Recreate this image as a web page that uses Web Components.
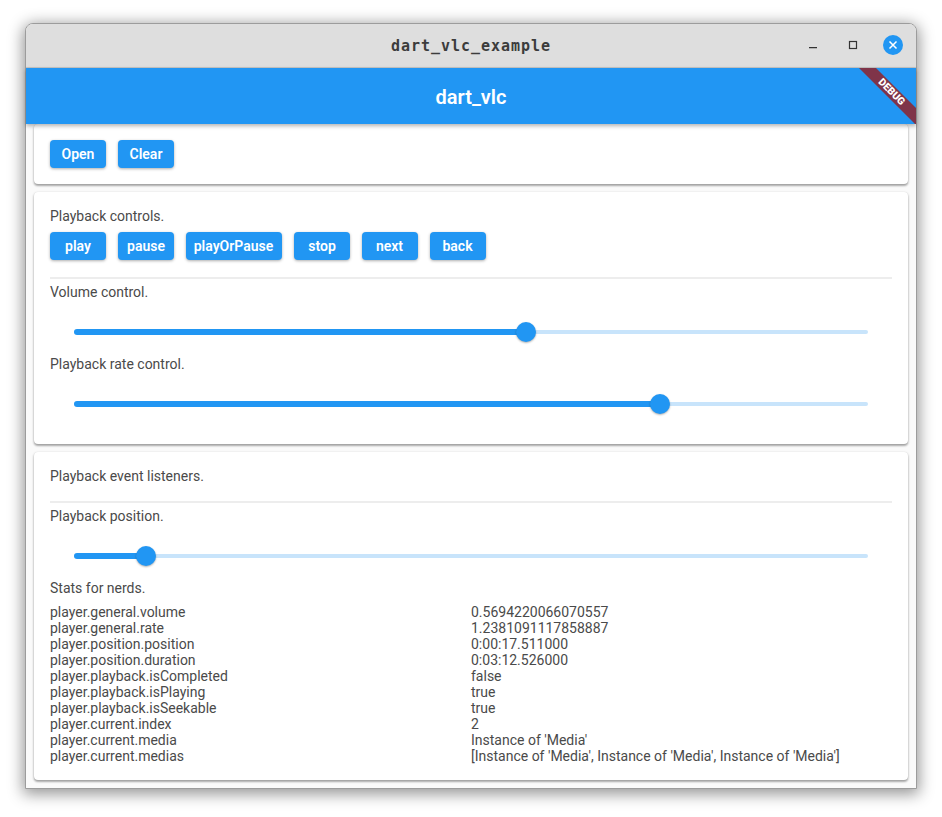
<!DOCTYPE html>
<html>
<head>
<meta charset="utf-8">
<title>dart_vlc_example</title>
<style>
  html, body { margin: 0; background: #fff; }
  body { width: 942px; height: 817px; overflow: hidden; font-family: Roboto, sans-serif; }
</style>
</head>
<body>
<desktop-window>
  <title-bar slot="title">dart_vlc_example</title-bar>
  <app-bar slot="bar">dart_vlc</app-bar>
  <debug-banner slot="bar"></debug-banner>

  <demo-card>
    <button-row>
      <demo-button>Open</demo-button>
      <demo-button>Clear</demo-button>
    </button-row>
  </demo-card>

  <demo-card>
    <demo-text>Playback controls.</demo-text>
    <button-row style="margin-top: 8px">
      <demo-button>play</demo-button>
      <demo-button>pause</demo-button>
      <demo-button style="width: 96px; padding: 0 1px 0 0">playOrPause</demo-button>
      <demo-button>stop</demo-button>
      <demo-button style="padding: 0 9px 0 8px">next</demo-button>
      <demo-button style="padding: 0 9px 0 8px">back</demo-button>
    </button-row>
    <demo-divider></demo-divider>
    <demo-text>Volume control.</demo-text>
    <demo-slider style="margin-top: 8px" value="56.93"></demo-slider>
    <demo-text>Playback rate control.</demo-text>
    <demo-slider style="margin-top: 8px" value="73.8"></demo-slider>
  </demo-card>

  <demo-card>
    <demo-text>Playback event listeners.</demo-text>
    <demo-divider></demo-divider>
    <demo-text>Playback position.</demo-text>
    <demo-slider style="margin-top: 8px" value="9.07"></demo-slider>
    <demo-text>Stats for nerds.</demo-text>
    <stats-table style="margin-top: 8px">
      <span>player.general.volume</span><span>0.5694220066070557</span>
      <span>player.general.rate</span><span>1.2381091117858887</span>
      <span>player.position.position</span><span>0:00:17.511000</span>
      <span>player.position.duration</span><span>0:03:12.526000</span>
      <span>player.playback.isCompleted</span><span>false</span>
      <span>player.playback.isPlaying</span><span>true</span>
      <span>player.playback.isSeekable</span><span>true</span>
      <span>player.current.index</span><span>2</span>
      <span>player.current.media</span><span>Instance of 'Media'</span>
      <span>player.current.medias</span><span>[Instance of 'Media', Instance of 'Media', Instance of 'Media']</span>
    </stats-table>
  </demo-card>
</desktop-window>

<script>
(function () {
  function define(name, html, setup) {
    const template = document.createElement("template");
    template.innerHTML = html;
    customElements.define(name, class extends HTMLElement {
      connectedCallback() {
        if (this.shadowRoot) return;
        this.attachShadow({ mode: "open" });
        this.shadowRoot.appendChild(template.content.cloneNode(true));
        if (setup) setup(this);
      }
    });
  }

  define("desktop-window", `
  <style>
    :host {
      display: flex;
      flex-direction: column;
      position: relative;
      box-sizing: border-box;
      width: 892px;
      height: 766px;
      margin: 23px 0 0 25px;
      border: 1px solid #9c9c9c;
      border-radius: 8px 8px 0 0;
      background: #fafafa;
      box-shadow: 0 3px 15px 2px rgba(0, 0, 0, .42);
    }
    .head { border-radius: 7px 7px 0 0; overflow: hidden; }
    .bar { position: relative; z-index: 1; }
    .list { display: flex; flex-direction: column; gap: 8px; padding: 0 8px 8px; }
  </style>
  <div class="head"><slot name="title"></slot></div>
  <div class="bar"><slot name="bar"></slot></div>
  <div class="list"><slot></slot></div>
`);

  define("title-bar", `
  <style>
    :host {
      display: flex;
      align-items: center;
      justify-content: center;
      position: relative;
      height: 43px;
      background: #dedede;
      border-bottom: 1px solid #c4c4c4;
      color: #3c3c3c;
      font: bold 15px "DejaVu Sans Mono", monospace;
      letter-spacing: .97px;
    }
    .controls {
      position: absolute;
      right: 13px;
      top: 11px;
      display: flex;
      gap: 20px;
      align-items: center;
    }
    svg { display: block; }
  </style>
  <slot></slot>
  <div class="controls">
    <svg width="20" height="20" viewBox="0 0 20 20"><path d="M6 12.6h8" stroke="#333" stroke-width="1.3" fill="none"/></svg>
    <svg width="20" height="20" viewBox="0 0 20 20"><rect x="6.5" y="6.5" width="7" height="7" stroke="#333" stroke-width="1.2" fill="none"/></svg>
    <svg width="20" height="20" viewBox="0 0 20 20"><circle cx="10" cy="10" r="10" fill="#2196f3"/><path d="M6.5 6.5l7 7M13.5 6.5l-7 7" stroke="#fff" stroke-width="1.5" fill="none"/></svg>
  </div>
`);

  define("app-bar", `
  <style>
    :host {
      display: flex;
      align-items: center;
      justify-content: center;
      box-sizing: border-box;
      height: 56px;
      padding-top: 2px;
      background: #2196f3;
      color: #fff;
      font: 600 20px Roboto, sans-serif;
      box-shadow: 0 2px 4px rgba(0, 0, 0, .3);
    }
  </style>
  <slot></slot>
`);

  define("debug-banner", `
  <style>
    :host {
      position: absolute;
      top: 0;
      right: 0;
      width: 60px;
      height: 56px;
      overflow: hidden;
      pointer-events: none;
    }
    div {
      position: absolute;
      top: 18.25px;
      left: -12.75px;
      width: 97px;
      height: 12px;
      transform: rotate(45deg);
      background: #7f3449;
      color: #fff;
      text-align: center;
      font: 900 10.2px/12px Roboto, sans-serif;
    }
  </style>
  <div>DEBUG</div>
`);

  define("demo-card", `
  <style>
    :host {
      display: flex;
      flex-direction: column;
      padding: 16px;
      background: #fff;
      border-radius: 4px;
      box-shadow: 0 2px 2px rgba(0, 0, 0, .24), 0 1px 3px rgba(0, 0, 0, .2), 0 0 1px rgba(0, 0, 0, .1);
    }
  </style>
  <slot></slot>
`);

  define("demo-text", `
  <style>
    :host {
      display: block;
      height: 16px;
      color: #4a4a4a;
      font: 14px/16px Roboto, sans-serif;
    }
  </style>
  <slot></slot>
`);

  define("button-row", `
  <style>
    :host { display: flex; gap: 12px; }
  </style>
  <slot></slot>
`);

  define("demo-button", `
  <style>
    :host {
      display: flex;
      align-items: center;
      justify-content: center;
      box-sizing: border-box;
      min-width: 56px;
      height: 28px;
      padding: 0 8px;
      background: #2196f3;
      color: #fff;
      border-radius: 4px;
      font: 600 14px/16px Roboto, sans-serif;
      box-shadow: 0 1px 3px rgba(0, 0, 0, .32);
    }
  </style>
  <slot></slot>
`);

  define("demo-divider", `
  <style>
    :host {
      display: block;
      height: 2px;
      margin: 17px 0 5px;
      background: #ededed;
    }
  </style>
`);

  define("demo-slider", `
  <style>
    :host {
      display: flex;
      align-items: center;
      height: 48px;
      padding: 0 24px;
    }
    .track {
      position: relative;
      flex: 1;
      height: 4px;
      background: #c8e4fb;
      border-radius: 2px;
    }
    .fill {
      position: absolute;
      left: 0;
      top: -1px;
      height: 6px;
      background: #2196f3;
      border-radius: 3px 0 0 3px;
    }
    .thumb {
      position: absolute;
      top: -8px;
      width: 20px;
      height: 20px;
      margin-left: -10px;
      background: #2196f3;
      border-radius: 50%;
      box-shadow: 0 1px 2px rgba(0, 0, 0, .3);
    }
  </style>
  <div class="track"><div class="fill"></div><div class="thumb"></div></div>
`, function (el) {
    const value = el.getAttribute("value") + "%";
    el.shadowRoot.querySelector(".fill").style.width = value;
    el.shadowRoot.querySelector(".thumb").style.left = value;
  });

  define("stats-table", `
  <style>
    :host {
      display: grid;
      grid-template-columns: 421px 421px;
      grid-auto-rows: 16px;
      color: #4a4a4a;
      font: 14px/16px Roboto, sans-serif;
    }
  </style>
  <slot></slot>
`);
})();
</script>
</body>
</html>
